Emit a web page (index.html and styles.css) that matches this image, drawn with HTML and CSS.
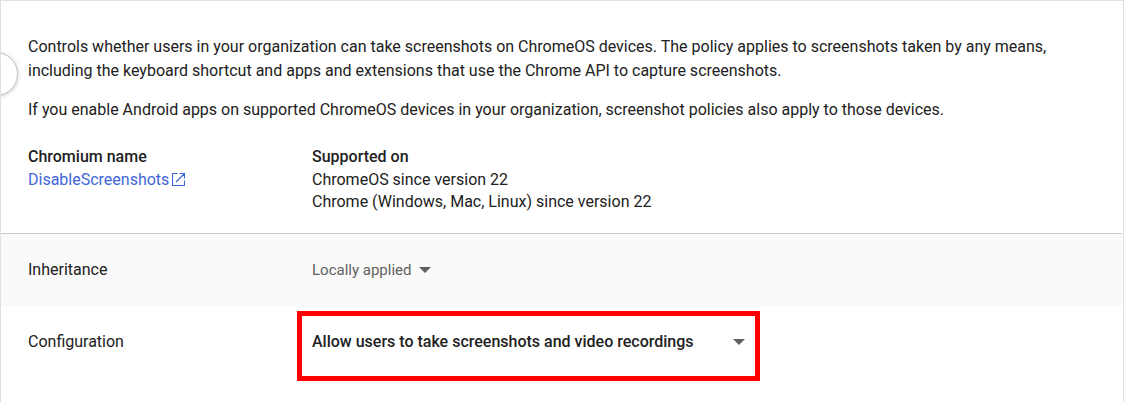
FILE: index.html
```
<!DOCTYPE html>
<html lang="en">
<head>
    <meta charset="UTF-8">
    <meta name="viewport" content="width=device-width, initial-scale=1.0">
    <title>Screenshot policy</title>
    <link rel="stylesheet" href="styles.css">
</head>
<body>

    <main class="panel">
        <button class="panel-toggle" type="button" aria-label="Toggle panel"></button>

        <section class="policy">
            <p>Controls whether users in your organization can take screenshots on ChromeOS devices. The policy applies to screenshots taken by any means, including the keyboard shortcut and apps and extensions that use the Chrome API to capture screenshots.</p>
            <p>If you enable Android apps on supported ChromeOS devices in your organization, screenshot policies also apply to those devices.</p>

            <div class="details">
                <div>
                    <h2>Chromium name</h2>
                    <a class="policy-link" href="#">DisableScreenshots<svg class="open-icon" viewBox="0 0 13 13" aria-hidden="true">
                            <path d="M5.500 .5H.5v12h12V7.500M7.500 .5h5V5.500M12.500 .5L4 9" fill="none" stroke="currentColor" stroke-width="1.200"/>
                        </svg></a>
                </div>
                <div>
                    <h2>Supported on</h2>
                    <ul>
                        <li>ChromeOS since version 22</li>
                        <li>Chrome (Windows, Mac, Linux) since version 22</li>
                    </ul>
                </div>
            </div>
        </section>

        <div class="setting shaded">
            <label for="inheritance">Inheritance</label>
            <div class="dropdown small">
                <select id="inheritance">
                    <option>Locally applied</option>
                </select>
                <svg class="arrow" viewBox="0 0 12 6" aria-hidden="true"><path d="M0 0h12L6 6z"/></svg>
            </div>
        </div>

        <div class="setting">
            <label for="configuration">Configuration</label>
            <div class="dropdown highlighted">
                <select id="configuration">
                    <option>Allow users to take screenshots and video recordings</option>
                </select>
                <svg class="arrow" viewBox="0 0 12 6" aria-hidden="true"><path d="M0 0h12L6 6z"/></svg>
            </div>
        </div>
    </main>

</body>
</html>
```

FILE: styles.css
```
* {
    margin: 0;
    padding: 0;
    box-sizing: border-box;
}

body {
    background-color: white;
    color: #212121;
    font-family: Roboto, sans-serif;
    font-size: 16px;
    line-height: 24px;
}

.panel {
    position: relative;
    min-height: 100vh;
    padding-right: 1px;
    border: 1px solid #e0e0e0;
    border-bottom: none;
    overflow: hidden;
}

/* round handle sticking out from the left edge */
.panel-toggle {
    position: absolute;
    top: 51px;
    left: -27px;
    width: 44px;
    height: 44px;
    border: 1px solid #c4c4c4;
    border-radius: 50%;
    background: white;
    box-shadow: 0 1px 4px rgba(0, 0, 0, 0.2);
    cursor: pointer;
}

.policy {
    padding: 34px 60px 20px 27px;
    border-bottom: 1px solid #c8c8c8;
}

.policy p {
    margin-bottom: 15px;
}

.details,
.setting {
    display: grid;
    grid-template-columns: 284px 1fr;
}

.details {
    margin-top: 23px;
    line-height: 22px;
}

h2 {
    font-size: 16px;
    font-weight: 500;
    line-height: 24px;
}

ul {
    list-style: none;
}

.policy-link {
    color: #3f67d8;
    text-decoration: none;
}

.open-icon {
    width: 13px;
    height: 13px;
    margin-left: 3px;
    vertical-align: -1px;
}

.setting {
    height: 72px;
    padding-left: 27px;
    align-items: center;
}

.shaded {
    background-color: #fafafa;
}

.dropdown {
    position: relative;
    display: flex;
    align-items: center;
    width: 433px;
    max-width: 100%;
}

.dropdown select {
    flex: 1;
    appearance: none;
    border: none;
    background: transparent;
    color: #212121;
    font-family: inherit;
    font-size: 16px;
    font-weight: 500;
    line-height: 24px;
    cursor: pointer;
}

.dropdown.small {
    width: max-content;
    gap: 7px;
}

.dropdown.small select {
    color: #616161;
    font-size: 15px;
    font-weight: 400;
}

.arrow {
    width: 12px;
    height: 6px;
    fill: #616161;
    pointer-events: none;
}

.highlighted::after {
    content: "";
    position: absolute;
    inset: -19px -15px -27px;
    border: 5px solid red;
    pointer-events: none;
}
```
